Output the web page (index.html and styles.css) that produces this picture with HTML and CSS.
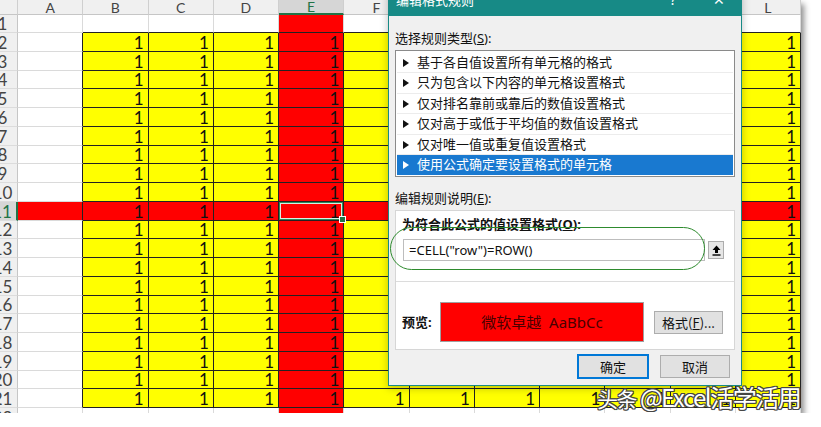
FILE: index.html
```html
<!DOCTYPE html>
<html lang="zh-CN">
<head>
    <meta charset="UTF-8">
    <title>编辑格式规则</title>
    <link rel="stylesheet" href="styles.css">
</head>
<body>
    <div class="sheet">
        <table class="grid">
            <colgroup>
                <col class="c-head">
                <col><col><col><col><col><col><col><col><col><col><col><col>
            </colgroup>
            <thead>
                <tr class="letters">
                    <th class="corner"></th>
                    <th>A</th><th>B</th><th>C</th><th>D</th><th class="cur">E</th><th>F</th>
                    <th>G</th><th>H</th><th>I</th><th>J</th><th>K</th><th>L</th>
                </tr>
            </thead>
            <tbody>
                <tr class="row1">
                    <th>1</th>
                    <td></td><td></td><td></td><td></td><td class="e"></td><td></td>
                    <td></td><td></td><td></td><td></td><td></td><td></td>
                </tr>
                <tr><th>2</th><td class="edge"></td><td class="v">1</td><td class="v">1</td><td class="v">1</td><td class="v e">1</td><td class="v">1</td><td class="v">1</td><td class="v">1</td><td class="v">1</td><td class="v">1</td><td class="v">1</td><td class="v">1</td></tr>
                <tr><th>3</th><td class="edge"></td><td class="v">1</td><td class="v">1</td><td class="v">1</td><td class="v e">1</td><td class="v">1</td><td class="v">1</td><td class="v">1</td><td class="v">1</td><td class="v">1</td><td class="v">1</td><td class="v">1</td></tr>
                <tr><th>4</th><td class="edge"></td><td class="v">1</td><td class="v">1</td><td class="v">1</td><td class="v e">1</td><td class="v">1</td><td class="v">1</td><td class="v">1</td><td class="v">1</td><td class="v">1</td><td class="v">1</td><td class="v">1</td></tr>
                <tr><th>5</th><td class="edge"></td><td class="v">1</td><td class="v">1</td><td class="v">1</td><td class="v e">1</td><td class="v">1</td><td class="v">1</td><td class="v">1</td><td class="v">1</td><td class="v">1</td><td class="v">1</td><td class="v">1</td></tr>
                <tr><th>6</th><td class="edge"></td><td class="v">1</td><td class="v">1</td><td class="v">1</td><td class="v e">1</td><td class="v">1</td><td class="v">1</td><td class="v">1</td><td class="v">1</td><td class="v">1</td><td class="v">1</td><td class="v">1</td></tr>
                <tr><th>7</th><td class="edge"></td><td class="v">1</td><td class="v">1</td><td class="v">1</td><td class="v e">1</td><td class="v">1</td><td class="v">1</td><td class="v">1</td><td class="v">1</td><td class="v">1</td><td class="v">1</td><td class="v">1</td></tr>
                <tr><th>8</th><td class="edge"></td><td class="v">1</td><td class="v">1</td><td class="v">1</td><td class="v e">1</td><td class="v">1</td><td class="v">1</td><td class="v">1</td><td class="v">1</td><td class="v">1</td><td class="v">1</td><td class="v">1</td></tr>
                <tr><th>9</th><td class="edge"></td><td class="v">1</td><td class="v">1</td><td class="v">1</td><td class="v e">1</td><td class="v">1</td><td class="v">1</td><td class="v">1</td><td class="v">1</td><td class="v">1</td><td class="v">1</td><td class="v">1</td></tr>
                <tr><th>10</th><td class="edge"></td><td class="v">1</td><td class="v">1</td><td class="v">1</td><td class="v e">1</td><td class="v">1</td><td class="v">1</td><td class="v">1</td><td class="v">1</td><td class="v">1</td><td class="v">1</td><td class="v">1</td></tr>
                <tr class="hot"><th class="cur">11</th><td class="edge"></td><td class="v">1</td><td class="v">1</td><td class="v">1</td><td class="v e active">1<span class="handle"></span></td><td class="v">1</td><td class="v">1</td><td class="v">1</td><td class="v">1</td><td class="v">1</td><td class="v">1</td><td class="v">1</td></tr>
                <tr><th>12</th><td class="edge"></td><td class="v">1</td><td class="v">1</td><td class="v">1</td><td class="v e">1</td><td class="v">1</td><td class="v">1</td><td class="v">1</td><td class="v">1</td><td class="v">1</td><td class="v">1</td><td class="v">1</td></tr>
                <tr><th>13</th><td class="edge"></td><td class="v">1</td><td class="v">1</td><td class="v">1</td><td class="v e">1</td><td class="v">1</td><td class="v">1</td><td class="v">1</td><td class="v">1</td><td class="v">1</td><td class="v">1</td><td class="v">1</td></tr>
                <tr><th>14</th><td class="edge"></td><td class="v">1</td><td class="v">1</td><td class="v">1</td><td class="v e">1</td><td class="v">1</td><td class="v">1</td><td class="v">1</td><td class="v">1</td><td class="v">1</td><td class="v">1</td><td class="v">1</td></tr>
                <tr><th>15</th><td class="edge"></td><td class="v">1</td><td class="v">1</td><td class="v">1</td><td class="v e">1</td><td class="v">1</td><td class="v">1</td><td class="v">1</td><td class="v">1</td><td class="v">1</td><td class="v">1</td><td class="v">1</td></tr>
                <tr><th>16</th><td class="edge"></td><td class="v">1</td><td class="v">1</td><td class="v">1</td><td class="v e">1</td><td class="v">1</td><td class="v">1</td><td class="v">1</td><td class="v">1</td><td class="v">1</td><td class="v">1</td><td class="v">1</td></tr>
                <tr><th>17</th><td class="edge"></td><td class="v">1</td><td class="v">1</td><td class="v">1</td><td class="v e">1</td><td class="v">1</td><td class="v">1</td><td class="v">1</td><td class="v">1</td><td class="v">1</td><td class="v">1</td><td class="v">1</td></tr>
                <tr><th>18</th><td class="edge"></td><td class="v">1</td><td class="v">1</td><td class="v">1</td><td class="v e">1</td><td class="v">1</td><td class="v">1</td><td class="v">1</td><td class="v">1</td><td class="v">1</td><td class="v">1</td><td class="v">1</td></tr>
                <tr><th>19</th><td class="edge"></td><td class="v">1</td><td class="v">1</td><td class="v">1</td><td class="v e">1</td><td class="v">1</td><td class="v">1</td><td class="v">1</td><td class="v">1</td><td class="v">1</td><td class="v">1</td><td class="v">1</td></tr>
                <tr><th>20</th><td class="edge"></td><td class="v">1</td><td class="v">1</td><td class="v">1</td><td class="v e">1</td><td class="v">1</td><td class="v">1</td><td class="v">1</td><td class="v">1</td><td class="v">1</td><td class="v">1</td><td class="v">1</td></tr>
                <tr><th>21</th><td class="edge"></td><td class="v">1</td><td class="v">1</td><td class="v">1</td><td class="v e">1</td><td class="v">1</td><td class="v">1</td><td class="v">1</td><td class="v">1</td><td class="v">1</td><td class="v">1</td><td class="v">1</td></tr>
                <tr><th>22</th><td></td><td></td><td></td><td></td><td class="e"></td><td></td><td></td><td></td><td></td><td></td><td></td><td></td></tr>
            </tbody>
        </table>
    </div>

    <!-- 条件格式对话框 -->
    <div class="dialog">
        <div class="titlebar">
            <span class="title">编辑格式规则</span>
            <span class="help">?</span>
            <span class="close">✕</span>
        </div>
        <div class="dlg-body">
            <div class="label">选择规则类型(<u>S</u>):</div>
            <ul class="rules">
                <li>基于各自值设置所有单元格的格式</li>
                <li>只为包含以下内容的单元格设置格式</li>
                <li>仅对排名靠前或靠后的数值设置格式</li>
                <li>仅对高于或低于平均值的数值设置格式</li>
                <li>仅对唯一值或重复值设置格式</li>
                <li class="sel">使用公式确定要设置格式的单元格</li>
            </ul>
            <div class="label gap">编辑规则说明(<u>E</u>):</div>
            <div class="group">
                <div class="label strong">为符合此公式的值设置格式(<u>O</u>):</div>
                <div class="formula-row">
                    <div class="formula">=CELL("row")=ROW()</div>
                    <button class="collapse">
                        <svg width="9" height="11" viewBox="0 0 9 11"><path d="M4.5 0.5 L8.5 5 H6 V8 H3 V5 H0.5 Z" fill="#000"/><rect x="0.5" y="9.3" width="8" height="1.4" fill="#000"/></svg>
                    </button>
                </div>
                <div class="divider"></div>
                <div class="preview-row">
                    <span class="label strong">预览:</span>
                    <div class="preview">微软卓越&nbsp;&nbsp;AaBbCc</div>
                    <button class="btn">格式(<u>F</u>)...</button>
                </div>
            </div>
            <div class="actions">
                <button class="btn primary">确定</button>
                <button class="btn">取消</button>
            </div>
        </div>
        <div class="mark"></div>
    </div>

    <div class="watermark"><span class="src">头条</span> @Excel活学活用</div>
</body>
</html>
```
FILE: styles.css
```css
body {
    margin: 0;
    background: #fff;
    font-family: "Noto Sans", "Noto Sans CJK SC", sans-serif;
    overflow: hidden;
}

/* 工作表 */
.sheet {
    width: 813px;
    height: 413px;
    margin-left: -12px;
    overflow: hidden;
    box-shadow: 3px 4px 6px rgba(0, 0, 0, 0.45);
}
.grid {
    table-layout: fixed;
    border-collapse: separate;
    border-spacing: 0;
    width: 813px;
    font-family: Lato, "DejaVu Sans", sans-serif;
}
.grid col { width: 65.25px; }
.grid col.c-head { width: 30px; }
.grid tr { height: 18.75px; }
.grid tr.letters { height: 14px; }
.grid tr.row1 { height: 18px; }

.letters th {
    background: #f0f0f0;
    color: #444;
    font-size: 14px;
    font-weight: normal;
    line-height: 13px;
    padding: 0;
    border-right: 1px solid #cfcfcf;
    border-bottom: 1px solid #c6c6c6;
    vertical-align: bottom;
}
.letters th.cur {
    background: #d6d6d6;
    color: #217346;
    border-bottom: 2px solid #217346;
}
tbody th {
    background: #f0f0f0;
    color: #444;
    font-size: 17px;
    font-weight: normal;
    line-height: 16px;
    padding: 0;
    border-right: 1px solid #c6c6c6;
    border-bottom: 1px solid #dcdcdc;
    vertical-align: bottom;
}
tbody th.cur {
    background: #d6d6d6;
    color: #217346;
    border-right: 2px solid #217346;
}
.grid td {
    padding: 0 4px 1px 0;
    border-right: 1px solid #dadada;
    border-bottom: 1px solid #dadada;
    text-align: right;
    vertical-align: bottom;
    font-size: 17px;
    line-height: 15px;
    color: #111;
    background: #fff;
}
.row1 td ~ td { border-bottom-color: #222; }
.grid td.edge { border-right-color: #222; }
.grid td.v {
    background: #ffff00;
    border-right-color: #222;
    border-bottom-color: #222;
}
.grid td.e { background: #ff0000; }
.hot td, .hot td.v { background: #ff0000; }
.grid td.active {
    position: relative;
    box-shadow: inset 0 0 0 1px #2e8a5a, inset 0 0 0 2px #d8eee2;
}
.handle {
    position: absolute;
    right: -3px;
    bottom: -3px;
    width: 5px;
    height: 5px;
    background: #217346;
    border: 1px solid #fff;
}

/* 对话框 */
.dialog {
    position: absolute;
    left: 388px;
    top: -10px;
    width: 354px;
    height: 396px;
    box-sizing: border-box;
    border: 1px solid #178a86;
    border-top: none;
    background: #f0f0f0;
    box-shadow: 0 2px 8px rgba(0, 0, 0, 0.25);
    font-size: 13px;
    color: #111;
}
.titlebar {
    height: 26px;
    background: #178a86;
    color: #fff;
    display: flex;
    align-items: flex-start;
    padding: 1px 0 0 8px;
    box-sizing: border-box;
    margin: 0 -1px;
    line-height: 18px;
}
.title { flex: 1; font-size: 13px; }
.help { width: 46px; text-align: center; font-size: 14px; }
.close { width: 46px; text-align: center; font-size: 14px; }

.dlg-body {
    padding: 13px 6px 0 6px;
}
.label {
    line-height: 18px;
    height: 18px;
}
.label.gap { margin-top: 12px; }
.label.strong { font-weight: 700; }
.rules {
    list-style: none;
    margin: 3px 0 0;
    padding: 2px 1px 0;
    background: #fff;
    border: 1px solid #8a8a8a;
    height: 123px;
}
.rules li {
    box-sizing: border-box;
    height: 20.4px;
    line-height: 19px;
    padding-left: 20px;
    border-bottom: 1px solid #ececec;
    position: relative;
}
.rules li::before {
    content: "";
    position: absolute;
    left: 6px;
    top: 6px;
    border-left: 6px solid #111;
    border-top: 4px solid transparent;
    border-bottom: 4px solid transparent;
}
.rules li.sel {
    background: #1979d0;
    color: #fff;
    border-bottom: none;
}
.rules li.sel::before { border-left-color: #fff; }

.group {
    margin-top: 3px;
    background: #fff;
    border: 1px solid #d6d6d6;
    height: 138px;
}
.group > .label { margin: 4px 0 0 6px; }
.formula-row {
    display: flex;
    align-items: center;
    margin: 6px 0 0 7px;
}
.formula {
    width: 302px;
    height: 22px;
    box-sizing: border-box;
    border: 1px solid #bdbdbd;
    background: #fff;
    padding-left: 5px;
    line-height: 20px;
    font-size: 13px;
}
.collapse {
    margin-left: 3px;
    width: 16px;
    height: 18px;
    padding: 0;
    border: 1px solid #adadad;
    background: #e6e6e6;
    display: flex;
    align-items: center;
    justify-content: center;
}
.divider {
    height: 1px;
    background: #dcdcdc;
    margin-top: 20px;
}
.preview-row {
    display: flex;
    align-items: center;
    margin: 20px 0 0 6px;
}
.preview-row .label { width: 38px; }
.preview {
    width: 204px;
    height: 40px;
    box-sizing: border-box;
    border: 1px solid #a0a0a0;
    background: #ff0000;
    color: #4a0000;
    font-size: 15px;
    text-align: center;
    line-height: 38px;
}
.btn {
    font-family: "Noto Sans CJK SC", sans-serif;
    font-size: 13px;
    color: #111;
    background: #e1e1e1;
    border: 1px solid #adadad;
    height: 23px;
    padding: 0;
}
.preview-row .btn {
    width: 69px;
    margin-left: 10px;
}
.actions {
    display: flex;
    justify-content: flex-end;
    gap: 12px;
    padding: 5px 5px 0 0;
}
.actions .btn { width: 70px; }
.actions .primary {
    border: 1px solid #0078d7;
    box-shadow: 0 0 0 1px #0078d7;
}

/* 批注圈 */
.mark {
    position: absolute;
    left: 1px;
    top: 237px;
    width: 315px;
    height: 43px;
    box-sizing: border-box;
    border: 1.5px solid #2e8b2e;
    border-radius: 22px;
}

.watermark {
    position: absolute;
    left: 597px;
    top: 379px;
    font-family: "Noto Sans CJK SC", sans-serif;
    font-size: 24px;
    color: #fff;
    letter-spacing: -1.5px;
    text-shadow: 1px 0 #444, -1px 0 #444, 0 1px #444, 0 -1px #444, 1px 1px #444, -1px -1px #444, 1px -1px #444, -1px 1px #444;
}
.watermark .src { font-size: 21px; }
```
